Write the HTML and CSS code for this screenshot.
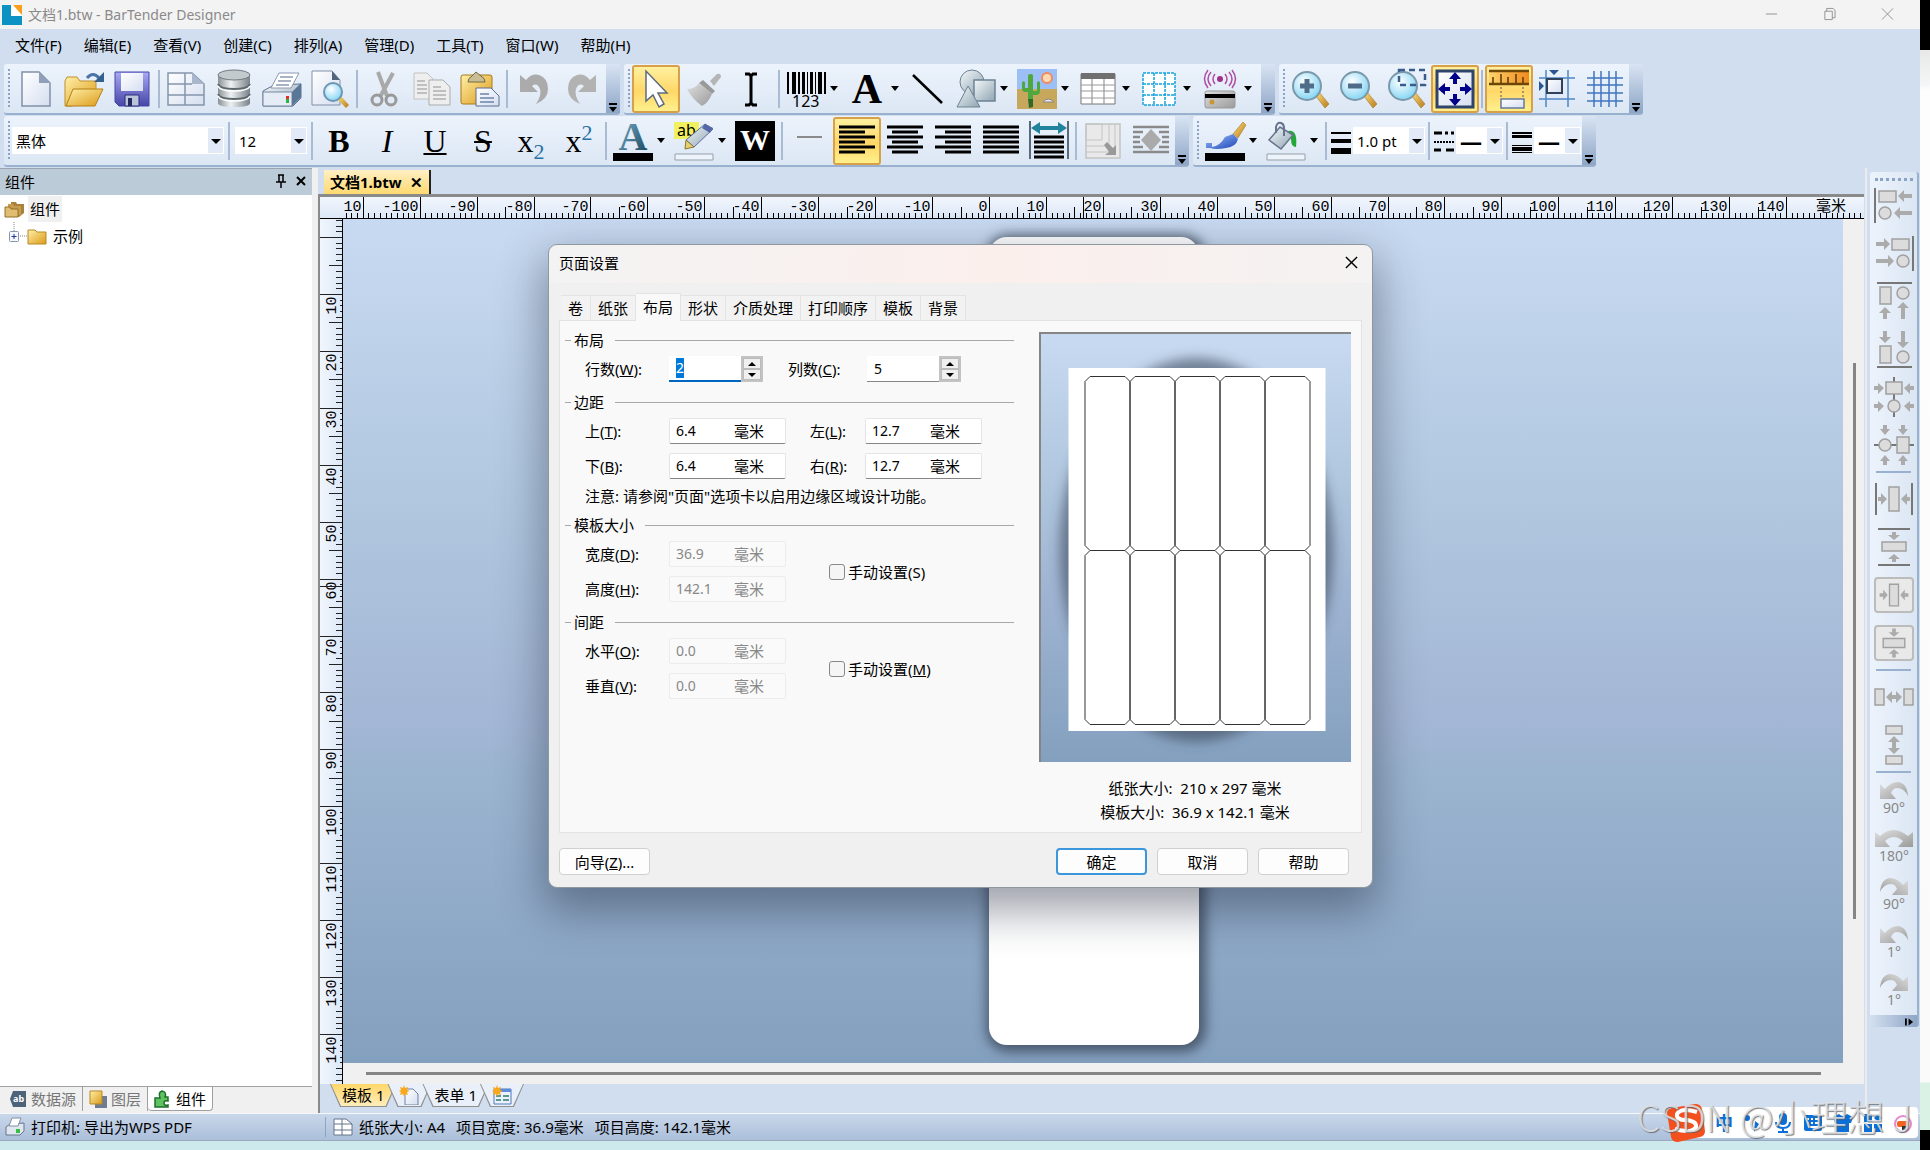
FILE: index.html
```html
<!DOCTYPE html>
<html lang="zh-CN">

<head>
    <meta charset="UTF-8">
    <meta name="viewport" content="width=device-width, initial-scale=1.0">
    <title>文档1.btw - BarTender Designer</title>
    <link rel="stylesheet" href="styles.css">
</head>

<body>

    <!-- Shared gradients -->
    <svg class="defs" aria-hidden="true">
        <defs>
            <linearGradient id="gPage" x1="0" y1="0" x2="1" y2="1"><stop offset="0" stop-color="#ffffff"/><stop offset="1" stop-color="#d5def0"/></linearGradient>
            <linearGradient id="gFolder" x1="0" y1="0" x2="1" y2="1"><stop offset="0" stop-color="#fff0a8"/><stop offset="1" stop-color="#dc9a18"/></linearGradient>
            <linearGradient id="gBlue" x1="0" y1="0" x2="0" y2="1"><stop offset="0" stop-color="#a9a9f5"/><stop offset="1" stop-color="#4646a8"/></linearGradient>
            <linearGradient id="gSteel" x1="0" y1="0" x2="1" y2="0"><stop offset="0" stop-color="#8a9296"/><stop offset=".4" stop-color="#eef1f2"/><stop offset="1" stop-color="#79828a"/></linearGradient>
            <linearGradient id="gGray" x1="0" y1="0" x2="1" y2="1"><stop offset="0" stop-color="#e0e0e0"/><stop offset="1" stop-color="#9a9a9a"/></linearGradient>
            <linearGradient id="gShape" x1="0" y1="0" x2="1" y2="1"><stop offset="0" stop-color="#f4f8fa"/><stop offset="1" stop-color="#8fa4b2"/></linearGradient>
            <linearGradient id="gTeal" x1="0" y1="0" x2="1" y2="1"><stop offset="0" stop-color="#7fb6d0"/><stop offset="1" stop-color="#143f58"/></linearGradient>
            <linearGradient id="gHandle" x1="0" y1="0" x2="1" y2="1"><stop offset="0" stop-color="#ffe27a"/><stop offset="1" stop-color="#b67a1c"/></linearGradient>
            <linearGradient id="gOrange" x1="0" y1="0" x2="1" y2="0"><stop offset="0" stop-color="#ffd36a"/><stop offset="1" stop-color="#f08a1e"/></linearGradient>
            <linearGradient id="gPaint" x1="0" y1="0" x2="1" y2="1"><stop offset="0" stop-color="#9ec0ff"/><stop offset="1" stop-color="#1b45b5"/></linearGradient>
            <radialGradient id="gLens" cx=".4" cy=".35" r=".7"><stop offset="0" stop-color="#ffffff"/><stop offset="1" stop-color="#7ed3f4"/></radialGradient>
            <filter id="soft" x="-20%" y="-20%" width="140%" height="140%"><feGaussianBlur stdDeviation="6"/></filter>
            <symbol id="lens" viewBox="0 0 40 40">
                <path d="M24 26l4-3 10 12-4 4z" fill="url(#gHandle)" stroke="#a9772b" stroke-width=".6"/>
                <circle cx="16" cy="17" r="14" fill="url(#gLens)" stroke="#7c98ab" stroke-width="2"/>
            </symbol>
            <symbol id="arcLeft" viewBox="0 0 28 18">
                <path d="M0 2l5 5q6-7 13-7 9 1 10 14-4-8-11-8-4 0-6 5l5 6H0z" fill="url(#gGray)"/>
            </symbol>
            <symbol id="pageGrid" viewBox="0 0 40 40">
                <path d="M2 4h24l12 11v21H2z" fill="url(#gPage)" stroke="#8595ab" stroke-width="1.5"/>
                <path d="M26 4v11h12z" fill="#a9b8cc"/>
                <path d="M2 15h24M2 26h36M19 4v32" stroke="#8595ab" stroke-width="1.5"/>
            </symbol>
        </defs>
    </svg>

    <div class="app">

        <!-- Title bar -->
        <header class="titlebar">
            <svg class="logo" viewBox="0 0 20 20"><path d="M0 0h9v11h11v9H0z" fill="#0c93c4"/><path d="M9 0h3l8 9v2H9z" fill="#fff"/><path d="M11 0h9v10z" fill="#f9a01b"/></svg>
            <span class="title">文档1.btw - BarTender Designer</span>
            <button class="win-btn" aria-label="最小化"><svg viewBox="0 0 14 14"><path d="M1 7h12"/></svg></button>
            <button class="win-btn" aria-label="还原"><svg viewBox="0 0 14 14"><path d="M2 4h8v9H2zM4 4V1h7l2 2v8h-3"/></svg></button>
            <button class="win-btn" aria-label="关闭"><svg viewBox="0 0 14 14"><path d="M1 1l12 12M13 1L1 13"/></svg></button>
        </header>

        <!-- Menu -->
        <nav class="menubar">
            <button>文件(F)</button>
            <button>编辑(E)</button>
            <button>查看(V)</button>
            <button>创建(C)</button>
            <button>排列(A)</button>
            <button>管理(D)</button>
            <button>工具(T)</button>
            <button>窗口(W)</button>
            <button>帮助(H)</button>
        </nav>

        <!-- Toolbar row 1 -->
        <div class="toolrow">
            <div class="toolbar">
                <button class="tool" aria-label="新建"><svg viewBox="0 0 40 40"><path d="M6 3h17l11 11v23H6z" fill="url(#gPage)" stroke="#8190a8" stroke-width="1.5"/><path d="M23 3v11h11z" fill="#8fa0b8"/></svg></button>
                <button class="tool" aria-label="打开"><svg viewBox="0 0 40 40"><path d="M1 12l2-4h10l3 4h16v10L8 37H1z" fill="url(#gFolder)" stroke="#bf8f2c"/><path d="M9 20h30l-8 17H2z" fill="url(#gFolder)" stroke="#b57f15"/><path d="M23 9q6-7 12 0" fill="none" stroke="#4a74a8" stroke-width="3"/><path d="M40 3v10H30z" fill="#35618f"/></svg></button>
                <button class="tool" aria-label="保存"><svg viewBox="0 0 40 40"><path d="M3 3h34v34H7l-4-4z" fill="url(#gBlue)" stroke="#4646a8"/><path d="M9 4h22v18H9z" fill="url(#gPage)"/><path d="M13 26h14v11H13z" fill="#b8c4d8" stroke="#2c2c80"/><path d="M16 29h4v8h-4z" fill="#222a60"/></svg></button>
                <span class="sep"></span>
                <button class="tool" aria-label="页面设置"><svg><use href="#pageGrid"/></svg></button>
                <button class="tool" aria-label="数据库"><svg viewBox="0 0 40 40"><path d="M4 6v28q0 4 16 4t16-4V6z" fill="url(#gSteel)"/><ellipse cx="20" cy="6" rx="16" ry="5" fill="#c3cacd" stroke="#707a80"/><path d="M4 15q2 5 16 5t16-5M4 25q2 5 16 5t16-5" fill="none" stroke="#5d676c" stroke-width="2"/><path d="M4 17q2 5 16 5t16-5M4 27q2 5 16 5t16-5" fill="none" stroke="#fff" stroke-width="1.5"/></svg></button>
                <button class="tool" aria-label="打印"><svg viewBox="0 0 40 40"><path d="M1 22l11-6 27-1v14l-8 8H1z" fill="url(#gShape)" stroke="#5d7590"/><path d="M1 23h29v14H1z" fill="#e6ecf5" stroke="#7688a0"/><path d="M30 23l9-9v14l-9 9z" fill="#5b7798"/><path d="M17 4h20l-8 15H9z" fill="#fff" stroke="#8b9ab0"/><path d="M18 8h13M16 12h13M14 16h13" stroke="#8b9ab0" stroke-width="1.5"/><path d="M24 27h3v3h-3z" fill="#e03030"/><path d="M24 30h3v4h-3z" fill="#30b040"/></svg></button>
                <button class="tool" aria-label="打印预览"><svg viewBox="0 0 40 40"><path d="M2 2h20l8 9v25H2z" fill="url(#gPage)" stroke="#8190a8"/><path d="M22 2v9h8z" fill="#52657e"/><path d="M27 30l4-3 8 9-3 3z" fill="url(#gHandle)"/><circle cx="23" cy="23" r="9" fill="url(#gLens)" stroke="#6c96b4" stroke-width="2"/></svg></button>
                <span class="sep"></span>
                <button class="tool" aria-label="剪切"><svg viewBox="0 0 40 40"><path d="M14 3l9 24M29 4L16 28" stroke="#a9a9a9" stroke-width="4"/><circle cx="13" cy="31" r="5" fill="none" stroke="#999" stroke-width="3"/><circle cx="27" cy="31" r="5" fill="none" stroke="#999" stroke-width="3"/></svg></button>
                <button class="tool" aria-label="复制"><svg viewBox="0 0 40 40"><path d="M2 4h13l6 6v20H2z" fill="#eee" stroke="#c2c2c2"/><path d="M17 11h14l7 7v18H17z" fill="#eee" stroke="#ababab"/><path d="M5 12h8M5 16h10M5 20h10M5 24h10M21 18h8M21 22h13M21 26h13M21 30h13" stroke="#b0b0b0" stroke-width="1.5"/></svg></button>
                <button class="tool" aria-label="粘贴"><svg viewBox="0 0 40 40"><rect x="1" y="6" width="31" height="29" rx="2" fill="url(#gFolder)" stroke="#a8781a"/><path d="M8 13q0-4 4-6l4-4 5 4q4 2 4 6z" fill="#c9bd96" stroke="#75683c"/><path d="M16 19h15l8 8v10H16z" fill="url(#gPage)" stroke="#5c6f90"/><path d="M20 25h9M20 29h14M20 33h14" stroke="#6c85aa" stroke-width="1.5"/></svg></button>
                <span class="sep"></span>
                <button class="tool" aria-label="撤消"><svg viewBox="0 0 40 40"><path d="M6 6l6 5q6-7 13-5 9 3 9 14 0 10-12 15 6-9 4-15-3-7-8-3l6 6H6z" fill="#ababab"/></svg></button>
                <button class="tool" aria-label="恢复"><svg viewBox="0 0 40 40"><path d="M34 6l-6 5q-6-7-13-5-9 3-9 14 0 10 12 15-6-9-4-15 3-7 8-3l-6 6h18z" fill="#b2b2b2"/></svg></button>
                <button class="cap" aria-label="工具栏选项"></button>
            </div>
            <div class="toolbar">
                <button class="tool active" aria-label="选择"><svg viewBox="0 0 40 40"><path d="M10 2v30l7-6 6 12 5-3-6-11h9z" fill="#fff" stroke="#5d6b80" stroke-width="1.5"/></svg></button>
                <button class="tool" aria-label="格式刷"><svg viewBox="0 0 40 40"><path d="M26 12l7-7q4-1 4 3l-7 9z" fill="#b5b5b5"/><path d="M19 11l12 11-3 3-13-11z" fill="#999"/><path d="M15 14l13 11q-4 9-10 12Q8 30 3 20q8 0 12-6z" fill="url(#gGray)"/></svg></button>
                <button class="tool" aria-label="文本光标"><svg viewBox="0 0 40 40"><path d="M13 5h4l2 2 2-2h4M19 7v27M13 36h4l2-2 2 2h4" fill="none" stroke="#000" stroke-width="3"/></svg></button>
                <span class="sep"></span>
                <button class="tool" aria-label="条形码"><svg viewBox="0 0 40 40"><path d="M1 3h2v22H1zM6 3h4v22H6zM12 3h2v22h-2zM16 3h3v22h-3zM21 3h1v22h-1zM24 3h3v22h-3zM29 3h1v22h-1zM32 3h4v22h-4zM38 3h2v22h-2z"/><text x="6" y="38" class="icon-num">123</text></svg></button><button class="drop" aria-label="条形码选项"></button>
                <button class="tool" aria-label="文本"><svg viewBox="0 0 40 40"><text x="20" y="34" text-anchor="middle" class="glyph-a">A</text></svg></button><button class="drop" aria-label="文本选项"></button>
                <button class="tool" aria-label="线条"><svg viewBox="0 0 40 40"><path d="M5 6l29 28" stroke="#000" stroke-width="2.5"/></svg></button>
                <button class="tool" aria-label="形状"><svg viewBox="0 0 40 40"><circle cx="16" cy="13" r="12" fill="url(#gShape)" stroke="#6c8294"/><path d="M18 11h21v21H18z" fill="url(#gShape)" stroke="#6c8294" stroke-width="1.5"/><path d="M12 17l12 21H1z" fill="url(#gShape)" stroke="#6c8294"/></svg></button><button class="drop" aria-label="形状选项"></button>
                <button class="tool" aria-label="图片"><svg viewBox="0 0 40 40"><path d="M0 0h40v22H0z" fill="#9cc0f5"/><path d="M0 20h40v20H0z" fill="#c7a75c"/><circle cx="30" cy="9" r="5" fill="#ffd9b0" stroke="#f08a60" stroke-width="2"/><path d="M11 6q3-2 5 0v24h-5zM5 14q0-3 3-1v6h4v4H7q-2-1-2-3zM16 22h4v-9q3-2 3 1v8q0 4-4 4h-3z" fill="#4fa83f"/><path d="M11 30h5v8l-4 1z" fill="#2f6a2a"/><path d="M26 33q5-6 11 0z" fill="#e8e8e8" stroke="#888"/></svg></button><button class="drop" aria-label="图片选项"></button>
                <button class="tool" aria-label="表格"><svg viewBox="0 0 40 40"><path d="M3 5h34v30H3z" fill="#fff" stroke="#777"/><path d="M3 4h34v6H3z" fill="#707070"/><path d="M3 16h34M3 22h34M3 29h34M14 10v25M26 10v25" stroke="#999" stroke-width="1.2"/></svg></button><button class="drop" aria-label="表格选项"></button>
                <button class="tool" aria-label="布局网格"><svg viewBox="0 0 40 40"><path d="M4 4h32v32H4zM4 15h32M4 26h32M15 4v32M26 4v32" fill="#fff" stroke="#12a3e0" stroke-width="1.5" stroke-dasharray="3 1"/></svg></button><button class="drop" aria-label="网格选项"></button>
                <button class="tool" aria-label="RFID"><svg viewBox="0 0 40 40"><circle cx="20" cy="10" r="3" fill="#a03090"/><path d="M15 5q-4 5 0 10M25 5q4 5 0 10M11 3q-6 7 0 14M29 3q6 7 0 14M8 1q-7 9 0 18M32 1q7 9 0 18" fill="none" stroke="#b050a5" stroke-width="1.5"/><rect x="5" y="22" width="30" height="17" rx="2" fill="url(#gGray)" stroke="#999"/><path d="M5 25h30v4H5z"/><circle cx="12" cy="33" r="2.5" fill="#c89632"/></svg></button><button class="drop" aria-label="RFID选项"></button>
                <button class="cap" aria-label="工具栏选项"></button>
            </div>
            <div class="toolbar">
                <button class="tool" aria-label="放大"><svg viewBox="0 0 40 40"><use href="#lens"/><path d="M16 10v14M9 17h14" stroke="#4f6d88" stroke-width="5"/></svg></button>
                <button class="tool" aria-label="缩小"><svg viewBox="0 0 40 40"><use href="#lens"/><path d="M9 17h14" stroke="#4f6d88" stroke-width="5"/></svg></button>
                <button class="tool" aria-label="缩放到选区"><svg viewBox="0 0 40 40"><use href="#lens"/><path d="M12 1h26v15H12z" fill="none" stroke="#3a5c8c" stroke-width="2.5" stroke-dasharray="6 4"/></svg></button>
                <button class="tool active" aria-label="适合窗口"><svg viewBox="0 0 40 40"><path d="M2 2h36v36H2z" fill="url(#gPage)" stroke="#2e4468" stroke-width="3"/><path d="M20 3l6 7h-4v5h-4v-5h-4zM20 37l6-7h-4v-5h-4v5h-4zM3 20l7-6v4h5v4h-5v4zM37 20l-7-6v4h-5v4h5v4z" fill="#00008b"/></svg></button>
                <span class="sep"></span>
                <button class="tool active" aria-label="标尺"><svg viewBox="0 0 40 40"><path d="M0 2h40v14H0z" fill="url(#gOrange)"/><path d="M0 2h40M0 15h40" stroke="#6c4708" stroke-width="2.5"/><path d="M4 8v6M12 5v9M19 8v6M27 5v9M34 8v6" stroke="#5a3a08" stroke-width="1.5"/><path d="M12 18v12M34 18v12" stroke="#555" stroke-dasharray="2 2"/><path d="M12 30h23v9H12z" fill="url(#gPage)" stroke="#66799c" stroke-width="1.5"/></svg></button>
                <button class="tool" aria-label="参考线"><svg viewBox="0 0 40 40"><path d="M2 9h36M2 30h36M9 1v37M31 1v37" stroke="#4f86c8" stroke-width="1.5"/><path d="M10 10h15v14H10z" fill="url(#gPage)" stroke="#33425c" stroke-width="2"/><path d="M12 1h10l-5 5zM2 12l5 5-5 5z" fill="#2c5596"/></svg></button>
                <button class="tool" aria-label="网格"><svg viewBox="0 0 40 40"><path d="M2 9h36M2 16h36M2 24h36M2 32h36M9 2v36M16 2v36M24 2v36M31 2v36" stroke="#4076c0" stroke-width="1.5"/></svg></button>
                <button class="cap" aria-label="工具栏选项"></button>
            </div>
        </div>

        <!-- Toolbar row 2 -->
        <div class="toolrow">
            <div class="toolbar">
                <span class="combo combo-font"><select aria-label="字体"><option>黑体</option></select></span>
                <span class="sep"></span>
                <span class="combo combo-size"><select aria-label="字号"><option>12</option></select></span>
                <span class="sep"></span>
                <button class="tool text-tool"><b>B</b></button>
                <button class="tool text-tool"><i>I</i></button>
                <button class="tool text-tool"><u>U</u></button>
                <button class="tool text-tool"><s>S</s></button>
                <button class="tool text-tool">x<sub>2</sub></button>
                <button class="tool text-tool">x<sup>2</sup></button>
                <span class="sep"></span>
                <button class="tool" aria-label="字体颜色"><svg viewBox="0 0 40 40"><text x="20" y="29" text-anchor="middle" class="glyph-a teal">A</text><path d="M0 32h40v8H0z"/></svg></button><button class="drop" aria-label="字体颜色选项"></button>
                <button class="tool" aria-label="突出显示"><svg viewBox="0 0 40 40"><path d="M0 1h25v17H0z" fill="#f0f060"/><text x="3" y="15" class="icon-ab">ab</text><path d="M12 19L31 3l8 5-19 18z" fill="url(#gShape)" stroke="#5c6c9c"/><path d="M31 3l8 4-3 5-8-5z" fill="#5468a8"/><path d="M12 19l8 7-9 2z" fill="#e8d070" stroke="#877530"/><path d="M1 33h38v6H1z" fill="#edf3fa" stroke="#97a0a8"/></svg></button><button class="drop" aria-label="突出显示选项"></button>
                <button class="tool" aria-label="反白"><svg viewBox="0 0 40 40"><path d="M0 0h40v40H0z"/><text x="20" y="29" text-anchor="middle" class="glyph-w">W</text></svg></button>
                <span class="sep"></span>
                <button class="tool" aria-label="水平线"><svg viewBox="0 0 40 40"><path d="M8 16h25" stroke="#8a8a8a" stroke-width="2"/></svg></button>
                <button class="tool active" aria-label="左对齐"><svg viewBox="0 0 40 40"><path d="M2 6h36M2 11h26M2 16h36M2 21h26M2 26h36M2 31h26" stroke="#000" stroke-width="3"/></svg></button>
                <button class="tool" aria-label="居中"><svg viewBox="0 0 40 40"><path d="M2 6h36M7 11h26M2 16h36M7 21h26M2 26h36M7 31h26" stroke="#000" stroke-width="3"/></svg></button>
                <button class="tool" aria-label="右对齐"><svg viewBox="0 0 40 40"><path d="M2 6h36M12 11h26M2 16h36M12 21h26M2 26h36M12 31h26" stroke="#000" stroke-width="3"/></svg></button>
                <button class="tool" aria-label="两端对齐"><svg viewBox="0 0 40 40"><path d="M2 6h36M2 11h36M2 16h36M2 21h36M2 26h36M2 31h36" stroke="#000" stroke-width="3"/></svg></button>
                <button class="tool" aria-label="强制两端对齐"><svg viewBox="0 0 40 40"><path d="M1 0v38M39 0v38" stroke="#556a7c" stroke-width="2"/><path d="M5 16h30M5 21h30M5 26h30M5 31h30M5 36h30" stroke="#000" stroke-width="3"/><path d="M2 7l9-6v4h18V1l9 6-9 6V9H11v4z" fill="#22839c"/></svg></button>
                <span class="sep"></span>
                <button class="tool" aria-label="自动调整"><svg viewBox="0 0 40 40"><path d="M3 3h34v34H3z" fill="#e9e9e9" stroke="#c4c4c4" stroke-width="1.5"/><path d="M3 3h16v16H3zM3 25h23V3M3 31h29V3" fill="none" stroke="#c4c4c4"/><path d="M21 24l3-3 6 6 3-3v10H22l4-3z" fill="#999"/></svg></button>
                <button class="tool" aria-label="文字环绕"><svg viewBox="0 0 40 40"><path d="M2 6h36M2 11h10M28 11h10M2 16h7M31 16h7M2 21h7M31 21h7M2 26h10M28 26h10M2 31h36" stroke="#8a8a8a" stroke-width="2.5"/><path d="M20 8l10 11-10 11-10-11z" fill="#aaa"/></svg></button>
                <button class="cap" aria-label="工具栏选项"></button>
            </div>
            <div class="toolbar">
                <button class="tool" aria-label="线条颜色"><svg viewBox="0 0 40 40"><path d="M28 13L38 1l3 3-8 13z" fill="url(#gHandle)" stroke="#a9772b" stroke-width=".6"/><path d="M1 22h6v4q8-1 13-10l8-3 5 5q-2 8-12 9-10 2-16 0H1z" fill="url(#gPaint)"/><path d="M0 32h40v8H0z"/></svg></button><button class="drop" aria-label="线条颜色选项"></button>
                <button class="tool" aria-label="填充颜色"><svg viewBox="0 0 40 40"><path d="M22 10q10-2 8 16-5 0-5-8z" fill="#22a83a"/><path d="M14 6L3 19l12 9 12-14z" fill="url(#gShape)" stroke="#66748c" stroke-width="1.5"/><path d="M10 12V6q1-5 5-4 3 1 3 5v8" fill="none" stroke="#66748c" stroke-width="2"/><path d="M1 33h38v6H1z" fill="#edf3fa" stroke="#97a0a8"/></svg></button><button class="drop" aria-label="填充颜色选项"></button>
                <span class="sep"></span>
                <svg class="mini" viewBox="0 0 20 26"><path d="M0 4h20v2H0zM0 11h20v4H0zM0 20h20v6H0z"/></svg>
                <span class="combo combo-pt"><select aria-label="线宽"><option>1.0 pt</option></select></span>
                <span class="sep"></span>
                <svg class="mini" viewBox="0 0 20 26"><path d="M0 5h8m3 0h3m3 0h3" stroke="#000" stroke-width="3"/><path d="M0 14h20" stroke="#000" stroke-width="2" stroke-dasharray="2 1"/><path d="M0 22h7m5 0h8" stroke="#000" stroke-width="3"/></svg>
                <span class="combo combo-line"><select aria-label="虚线样式"><option>—</option></select></span>
                <span class="sep"></span>
                <svg class="mini" viewBox="0 0 20 26"><path d="M0 4h20v2H0zM0 7h20v3H0zM0 17h20v1H0zM0 19h20v4H0zM0 24h20v1H0z"/></svg>
                <span class="combo combo-line"><select aria-label="复合线样式"><option>—</option></select></span>
                <button class="cap" aria-label="工具栏选项"></button>
            </div>
        </div>

        <main class="main">

            <!-- Components panel -->
            <aside class="side">
                <div class="side-head">
                    <span>组件</span>
                    <button aria-label="固定"><svg viewBox="0 0 12 14"><path d="M3 1h6M4 1v7M8 1v7M1 8h10M6 8v6" fill="none" stroke="#000" stroke-width="1.5"/></svg></button>
                    <button aria-label="关闭面板"><svg viewBox="0 0 12 14"><path d="M2 3l8 8M10 3l-8 8" stroke="#000" stroke-width="2"/></svg></button>
                </div>
                <ul class="tree">
                    <li><svg viewBox="0 0 20 18"><path d="M7 2h5l1 2h7v9l-5 4H7z" fill="#a8813a"/><path d="M4 4h5l1 2h7v9H4z" fill="#c79c4c"/><path d="M1 7h5l1 2h7v8H1z" fill="#e0bd70" stroke="#93702c"/></svg><span class="root">组件</span></li>
                    <li class="child"><svg class="plus" viewBox="0 0 18 28"><path d="M5 0v9M11 14h7" stroke="#888" stroke-dasharray="1 1"/><rect x=".5" y="9.500" width="9" height="10" rx="1" fill="#f4f7fb" stroke="#8a97a8"/><path d="M2.500 14.500h5M5 12v5" stroke="#203890"/></svg><svg viewBox="0 0 20 18"><path d="M1 3h7l2 2h9v12H1z" fill="url(#gFolder)" stroke="#b58a25"/></svg><span>示例</span></li>
                </ul>
                <div class="side-tabs">
                    <button><svg viewBox="0 0 18 18"><path d="M4 1h13v16H4L1 9z" fill="#4f6378"/><text x="4" y="12" class="icon-tiny">ab</text></svg>数据源</button>
                    <button><svg viewBox="0 0 18 18"><path d="M6 6h12v12H6z" fill="#6d7c90"/><path d="M1 1h12v13H1z" fill="url(#gFolder)" stroke="#b58a25"/></svg>图层</button>
                    <button class="on"><svg viewBox="0 0 18 18"><path d="M1 8h5q-2-6 2-7 5 1 3 6h3v4q-4-1-4 2t4 2v2H1z" fill="#5fc45f" stroke="#1f6d2c" stroke-width="1.5"/></svg>组件</button>
                </div>
            </aside>

            <!-- Document -->
            <section class="doc">
                <div class="doc-tabs"><button class="doc-tab">文档1.btw <span>✕</span></button></div>
                <div class="doc-frame">
                    <svg class="ruler-h" id="rulerH"></svg>
                    <div class="doc-body">
                        <svg class="ruler-v" id="rulerV"></svg>
                        <div class="canvas"><div class="label-page"></div></div>
                        <div class="scroll-v"><span></span></div>
                        <div class="scroll-h"><span></span></div>
                    </div>
                </div>
                <div class="sheets">
                    <button class="sheet on">模板 1</button>
                    <button class="sheet new" aria-label="新建模板"><svg viewBox="0 0 20 20"><path d="M6 4h8l5 5v11H6z" fill="url(#gPage)" stroke="#6c80a0"/><path d="M5 0l1 3 3-1-1 3 3 1-3 1 1 3-3-1-1 3-1-3-3 1 1-3-2-1 2-1-1-3 3 1z" fill="#f9a81b"/></svg></button>
                    <button class="sheet">表单 1</button>
                    <button class="sheet new" aria-label="新建表单"><svg viewBox="0 0 20 20"><path d="M2 4h17v15H2z" fill="#eaf2ff" stroke="#5078b8"/><path d="M2 4h17v3H2z" fill="#5b8ddb"/><path d="M4 11h5m2 0h6M4 15h5m2 0h6" stroke="#5b9a8a" stroke-width="2"/><path d="M5 0l1 3 3-1-1 3 3 1-3 1 1 3-3-1-1 3-1-3-3 1 1-3-2-1 2-1-1-3 3 1z" fill="#f9a81b"/></svg></button>
                </div>
            </section>

            <!-- Arrange toolbar -->
            <aside class="dock">
                <div class="dock-bar">
                    <button class="arr" aria-label="左对齐对象"><svg viewBox="0 0 40 40"><path d="M1 3v35" stroke="#777" stroke-width="2"/><g class="shape"><path d="M5 6h17v11H5z"/><circle cx="11" cy="28" r="6"/></g><path class="arrow" d="M24 11l6-6v4h8v4h-8v4zM20 28l6-6v4h12v4H26v4z"/></svg></button>
                    <button class="arr" aria-label="右对齐对象"><svg viewBox="0 0 40 40"><path d="M39 3v35" stroke="#777" stroke-width="2"/><g class="shape"><path d="M18 6h17v11H18z"/><circle cx="29" cy="28" r="6"/></g><path class="arrow" d="M16 11l-6-6v4H2v4h8v4zM20 28l-6-6v4H2v4h12v4z"/></svg></button>
                    <button class="arr" aria-label="顶端对齐"><svg viewBox="0 0 40 40"><path d="M3 2h35" stroke="#777" stroke-width="2"/><g class="shape"><path d="M6 6h11v17H6z"/><circle cx="29" cy="12" r="6"/></g><path class="arrow" d="M11 26l6 6h-4v6H9v-6H5zM29 21l6 6h-4v11h-4V27h-4z"/></svg></button>
                    <button class="arr" aria-label="底端对齐"><svg viewBox="0 0 40 40"><path d="M3 38h35" stroke="#777" stroke-width="2"/><g class="shape"><path d="M6 17h11v17H6z"/><circle cx="29" cy="28" r="6"/></g><path class="arrow" d="M11 14l6-6h-4V2H9v6H5zM29 19l6-6h-4V2h-4v11h-4z"/></svg></button>
                    <button class="arr" aria-label="垂直居中"><svg viewBox="0 0 40 40"><path d="M20 0v40" stroke="#777" stroke-width="2"/><g class="shape"><path d="M12 5h16v12H12z"/><circle cx="20" cy="29" r="6"/></g><path class="arrow" d="M10 11L4 6v3H0v4h4v4zM30 11l6-5v3h4v4h-4v4zM10 29l-6-5v3H0v4h4v4zM30 29l6-5v3h4v4h-4v4z"/></svg></button>
                    <button class="arr" aria-label="水平居中"><svg viewBox="0 0 40 40"><path d="M0 20h40" stroke="#777" stroke-width="2"/><g class="shape"><path d="M23 12h12v16H23z"/><circle cx="11" cy="20" r="6"/></g><path class="arrow" d="M11 10l5-6h-3V0H9v4H6zM29 10l5-6h-3V0h-4v4h-3zM11 30l5 6h-3v4H9v-4H6zM29 30l5 6h-3v4h-4v-4h-3z"/></svg></button>
                    <span class="hsep"></span>
                    <button class="arr" aria-label="页面水平居中"><svg viewBox="0 0 40 40"><path d="M2 4v32M38 4v32" stroke="#777" stroke-width="2"/><path class="shape" d="M15 8h10v24H15z"/><path class="arrow" d="M13 20l-6-6v4H4v4h3v4zM27 20l6-6v4h3v4h-3v4z"/></svg></button>
                    <button class="arr" aria-label="页面垂直居中"><svg viewBox="0 0 40 40"><path d="M4 2h32M4 38h32" stroke="#777" stroke-width="2"/><path class="shape" d="M8 15h24v9H8z"/><path class="arrow" d="M20 13l6-5h-4V5h-4v3h-4zM20 27l6 5h-4v3h-4v-3h-4z"/></svg></button>
                    <button class="arr boxed" aria-label="模板水平居中"><svg viewBox="0 0 40 40"><path class="shape" d="M15 8h10v24H15z"/><path class="arrow" d="M13 20l-5-6v4H4v4h4v4zM27 20l5-6v4h4v4h-4v4z"/></svg></button>
                    <button class="arr boxed" aria-label="模板垂直居中"><svg viewBox="0 0 40 40"><path class="shape" d="M8 15h24v10H8z"/><path class="arrow" d="M20 13l6-5h-4V4h-4v4h-4zM20 27l6 5h-4v4h-4v-4h-4z"/></svg></button>
                    <span class="hsep"></span>
                    <button class="arr" aria-label="水平间距"><svg viewBox="0 0 40 40"><path class="shape" d="M1 12h9v16H1zM30 12h9v16h-9z"/><path class="arrow" d="M12 20l6-6v4h4v-4l6 6-6 6v-4h-4v4z"/></svg></button>
                    <button class="arr" aria-label="垂直间距"><svg viewBox="0 0 40 40"><path class="shape" d="M12 1h16v8H12zM12 31h16v8H12z"/><path class="arrow" d="M20 11l6 6h-4v6h4l-6 6-6-6h4v-6h-4z"/></svg></button>
                    <span class="hsep"></span>
                    <button class="arr rot"><svg viewBox="0 0 28 18"><use href="#arcLeft"/></svg>90°</button>
                    <button class="arr rot"><svg class="wide" viewBox="0 0 38 18"><path d="M0 2l5 4q13-12 28 0l5-4v15H23l5-6q-9-8-18 0l5 6H0z" fill="url(#gGray)"/></svg>180°</button>
                    <button class="arr rot"><svg class="flip" viewBox="0 0 28 18"><use href="#arcLeft"/></svg>90°</button>
                    <button class="arr rot"><svg viewBox="0 0 28 18"><use href="#arcLeft"/></svg>1°</button>
                    <button class="arr rot"><svg class="flip" viewBox="0 0 28 18"><use href="#arcLeft"/></svg>1°</button>
                    <button class="dock-cap" aria-label="工具栏选项"><svg viewBox="0 0 10 8"><path d="M0 0h2v8H0zM4 0l5 4-5 4z"/></svg></button>
                </div>
            </aside>
        </main>

        <!-- Status bar -->
        <footer class="statusbar">
            <div class="status-left">
                <svg viewBox="0 0 20 20"><path d="M1 10l4-3 14-1v8l-4 4H1z" fill="#dfe6ee" stroke="#65758c"/><path d="M7 1h9l-3 8H4z" fill="#fff" stroke="#8090a5"/><path d="M11 12h4v4h-4z" fill="#35c045"/></svg>
                <span>打印机: 导出为WPS PDF</span>
            </div>
            <div class="status-right">
                <svg viewBox="0 0 20 20"><path d="M1 2h12l6 5v11H1z" fill="#fff" stroke="#65758c"/><path d="M1 7h18M1 13h18M9 2v16" stroke="#65758c"/></svg>
                <span>纸张大小: A4</span><span>项目宽度: 36.9毫米</span><span>项目高度: 142.1毫米</span>
            </div>
        </footer>
        <div class="desktop"></div>
    </div>
    <div class="edge"></div>

    <!-- Page setup dialog -->
    <form class="dialog" role="dialog" aria-labelledby="dlgTitle">
        <div class="dlg-head">
            <span id="dlgTitle">页面设置</span>
            <button type="button" aria-label="关闭"><svg viewBox="0 0 14 14"><path d="M1 1l12 12M13 1L1 13" stroke="#000" stroke-width="1.5"/></svg></button>
        </div>
        <div class="dlg-tabs" role="tablist">
            <button type="button" role="tab">卷</button>
            <button type="button" role="tab">纸张</button>
            <button type="button" role="tab" class="on" aria-selected="true">布局</button>
            <button type="button" role="tab">形状</button>
            <button type="button" role="tab">介质处理</button>
            <button type="button" role="tab">打印顺序</button>
            <button type="button" role="tab">模板</button>
            <button type="button" role="tab">背景</button>
        </div>
        <div class="dlg-page">
            <div class="settings">
                <h2>布局</h2>
                <div class="group">
                    <div class="row">
                        <label for="rows">行数(<u>W</u>):</label>
                        <span class="spin focus"><input id="rows" type="text" value="2"><span class="arrows"><button type="button" class="up" aria-label="增加行数"></button><button type="button" class="down" aria-label="减少行数"></button></span></span>
                        <label for="cols" class="mid">列数(<u>C</u>):</label>
                        <span class="spin"><input id="cols" type="text" value="5"><span class="arrows"><button type="button" class="up" aria-label="增加列数"></button><button type="button" class="down" aria-label="减少列数"></button></span></span>
                    </div>
                </div>
                <h2>边距</h2>
                <div class="group">
                    <div class="row">
                        <label for="mt">上(<u>T</u>):</label>
                        <span class="box"><input id="mt" type="text" value="6.4">毫米</span>
                        <label for="ml" class="right">左(<u>L</u>):</label>
                        <span class="box"><input id="ml" type="text" value="12.7">毫米</span>
                    </div>
                    <div class="row">
                        <label for="mb">下(<u>B</u>):</label>
                        <span class="box"><input id="mb" type="text" value="6.4">毫米</span>
                        <label for="mr" class="right">右(<u>R</u>):</label>
                        <span class="box"><input id="mr" type="text" value="12.7">毫米</span>
                    </div>
                    <p class="note">注意: 请参阅"页面"选项卡以启用边缘区域设计功能。</p>
                </div>
                <h2>模板大小</h2>
                <div class="group split">
                    <div class="rows">
                        <div class="row"><label for="tw">宽度(<u>D</u>):</label><span class="box off"><input id="tw" type="text" value="36.9" disabled>毫米</span></div>
                        <div class="row"><label for="th">高度(<u>H</u>):</label><span class="box off"><input id="th" type="text" value="142.1" disabled>毫米</span></div>
                    </div>
                    <label class="check"><input type="checkbox"><span>手动设置(S)</span></label>
                </div>
                <h2>间距</h2>
                <div class="group split">
                    <div class="rows">
                        <div class="row"><label for="gh">水平(<u>O</u>):</label><span class="box off"><input id="gh" type="text" value="0.0" disabled>毫米</span></div>
                        <div class="row"><label for="gv">垂直(<u>V</u>):</label><span class="box off"><input id="gv" type="text" value="0.0" disabled>毫米</span></div>
                    </div>
                    <label class="check"><input type="checkbox"><span>手动设置(<u>M</u>)</span></label>
                </div>
            </div>
            <div class="preview">
                <svg class="preview-art" id="preview" viewBox="0 0 309 428">
                    <ellipse cx="155" cy="216" rx="137" ry="192" fill="#3d4a5a" fill-opacity=".6" filter="url(#soft)"/>
                    <path d="M27 34h257v363H27z" fill="#fff"/>
                </svg>
                <p>纸张大小:&nbsp; 210 x 297 毫米</p>
                <p>模板大小:&nbsp; 36.9 x 142.1 毫米</p>
            </div>
        </div>
        <div class="dlg-foot">
            <button type="button" class="wizard">向导(<u>Z</u>)...</button>
            <button type="submit" class="default">确定</button>
            <button type="button">取消</button>
            <button type="button">帮助</button>
        </div>
    </form>

    <!-- Input method bar -->
    <div class="ime">
        <svg class="sogou" viewBox="0 0 40 38"><path d="M2 9q0-4 5-5L30 0q6 0 7 5l3 22q0 5-5 6l-22 5q-6 0-7-5z" fill="#f4501e"/><path d="M32 8q-16-5-20 2-1 6 9 6 11 1 10 7-4 7-21 2" fill="none" stroke="#fff" stroke-width="4"/></svg>
        <b>中</b>
        <svg viewBox="0 0 20 20"><circle cx="4" cy="5" r="3"/><path d="M12 8l4 3-5 8z"/></svg>
        <svg viewBox="0 0 20 20"><rect x="6" y="0" width="8" height="12" rx="4"/><path d="M3 9q0 6 7 6t7-6M10 15v4M5 19h10" fill="none" stroke="#0a6fd8" stroke-width="2"/></svg>
        <svg viewBox="0 0 20 20"><rect x="1" y="2" width="18" height="16" rx="2"/><path d="M4 6h2m2 0h2m2 0h4M4 10h2m2 0h2m2 0h4M5 14h10" stroke="#fff" stroke-width="2"/></svg>
        <svg viewBox="0 0 20 20"><path d="M0 4l6-3q4 4 8 0l6 3-2 6h-2v9H4v-9H2z"/></svg>
        <svg viewBox="0 0 20 20"><path d="M1 1h8v8H1zM1 11h8v8H1zM11 11h8v8h-8zM11 5l4-4 4 4-4 4z"/></svg>
        <svg viewBox="0 0 20 20"><circle cx="10" cy="11" r="8" fill="#fff" stroke="#e58ad0" stroke-width="2"/><rect x="4" y="8" width="12" height="6" rx="2" fill="#f4641e"/><path d="M9 13h4v4H9z" fill="#333"/></svg>
    </div>
    <div class="watermark">CSDN @小理想 J</div>

    <script src="script.js"></script>
</body>

</html>
```
FILE: styles.css
```css
* {
    box-sizing: border-box;
}

body,
html {
    margin: 0;
    height: 100%;
    overflow: hidden;
}

body {
    display: flex;
    font-family: "Noto Sans", "Noto Sans CJK SC", sans-serif;
    font-size: 15px;
    line-height: 20px;
    color: #000;
    background: #fff;
}

button,
input,
select {
    font: inherit;
    color: inherit;
    margin: 0;
    padding: 0;
    border: 0;
    background: none;
}

.defs {
    position: absolute;
    width: 0;
    height: 0;
}

.app {
    flex: 1;
    min-width: 0;
    display: flex;
    flex-direction: column;
    background: #d0deef;
}

/* Strip of the window behind */
.edge {
    width: 10px;
    background: linear-gradient(#000 50px, #e8e8e8 50px, #f4f5f6 84px, #fdfdfd 90px, #fafafa 1082px, #daf1e5 1083px, #daf1e5 1130px, #000 1130px);
}

/* Title bar */
.titlebar {
    display: flex;
    align-items: center;
    height: 29px;
    padding: 0 4px 0 2px;
    background: #f3f3f3;
}

.logo {
    width: 20px;
    height: 20px;
    margin-right: 6px;
}

.title {
    flex: 1;
    font-size: 14px;
    color: #8a8a8a;
}

.win-btn {
    width: 58px;
    height: 29px;
}

.win-btn svg {
    width: 13px;
    height: 14px;
    fill: none;
    stroke: #8f8f8f;
}

/* Menu */
.menubar {
    display: flex;
    gap: 22px;
    height: 35px;
    padding: 0 0 3px 15px;
    font-size: 15px;
}

/* Toolbars */
.toolrow {
    display: flex;
    gap: 4px;
    height: 52px;
    padding: 0 0 1px 4px;
}

.toolbar {
    display: flex;
    align-items: center;
    padding-left: 8px;
    border-bottom: 2px solid #9ab0cf;
    border-radius: 3px;
    background: linear-gradient(#ecf3fc, #dce7f4);
    position: relative;
}

.toolbar::before {
    content: "";
    position: absolute;
    left: 4px;
    top: 5px;
    bottom: 6px;
    border-left: 2px dotted #8ba3c4;
}

.tool {
    display: flex;
    align-items: center;
    justify-content: center;
    width: 48px;
    height: 48px;
}

.tool svg {
    width: 40px;
    height: 40px;
    overflow: visible;
}

.tool.active {
    border: 2px solid #d9a04a;
    border-radius: 3px;
    background: linear-gradient(#fff0a0, #ffd768 55%, #fff08c);
}

.sep {
    width: 2px;
    height: 38px;
    margin: 0 2px;
    background: #a9bbd3;
}

.drop {
    width: 13px;
    height: 48px;
}

.drop::before,
.combo::after,
.up::before,
.down::before {
    content: "";
    display: block;
    width: 0;
    border: 4px solid transparent;
    border-top: 5px solid #000;
    border-bottom: 0;
}

.up::before,
.down::before {
    margin: auto;
}

.drop + .cap {
    margin-left: 4px;
}

.cap {
    align-self: stretch;
    width: 14px;
    background: linear-gradient(#d8e4f3, #8ea5c6);
    padding-top: 38px;
}

.cap::before {
    content: "";
    display: block;
    width: 8px;
    margin: 0 auto 2px;
    border-top: 2px solid #000;
}

.cap::after {
    content: "";
    display: block;
    width: 0;
    margin: auto;
    border: 4px solid transparent;
    border-top: 5px solid #000;
    border-bottom: 0;
}

.icon-num {
    font: 16px "Noto Sans", sans-serif;
}

.icon-ab {
    font: 16px "Noto Sans", sans-serif;
}

.icon-tiny {
    font: bold 9px "Noto Sans", sans-serif;
    fill: #fff;
}

.glyph-a {
    font: bold 42px "Liberation Serif", serif;
}

.glyph-a.teal {
    font-size: 40px;
    fill: url(#gTeal);
}

.glyph-w {
    font: bold 30px "Liberation Serif", serif;
    fill: #fff;
}

.text-tool {
    display: block;
    font: 32px/44px "Liberation Serif", serif;
}

.text-tool u,
.text-tool s {
    text-decoration-thickness: 2px;
}

.text-tool sub,
.text-tool sup {
    font-size: 22px;
    line-height: 0;
    color: #2a70a5;
}

.combo {
    position: relative;
    height: 27px;
    background: linear-gradient(#e1eaf6, #e1eaf6) right 1px center / 15px 25px no-repeat #fff;
}

.combo::after {
    position: absolute;
    right: 3px;
    top: 12px;
    border-width: 5px 5px 0;
}

.combo select {
    appearance: none;
    width: 100%;
    height: 27px;
    padding-left: 4px;
}

.combo-font {
    width: 212px;
    margin-right: 2px;
}

.combo-size {
    width: 72px;
    margin: 0 2px 0 3px;
}

.combo-pt {
    width: 72px;
    margin-right: 1px;
}

.combo-line {
    width: 47px;
    margin-right: 1px;
}

.combo-line select {
    font-size: 22px;
    font-weight: bold;
}

.mini {
    width: 20px;
    height: 26px;
    margin: 0 2px;
}

/* Main area */
.main {
    flex: 1;
    min-height: 0;
    display: flex;
}

.side {
    width: 318px;
    display: flex;
    flex-direction: column;
    border-right: 6px solid #f0f0f0;
    background: #fff;
}

.side-head {
    display: flex;
    align-items: center;
    height: 27px;
    padding: 0 1px 0 5px;
    border-top: 1px solid #9aa5b0;
    background: #bccbd8;
}

.side-head span {
    flex: 1;
}

.side-head button {
    width: 20px;
    height: 20px;
}

.side-head svg {
    width: 12px;
    height: 14px;
}

.tree {
    flex: 1;
    margin: 0;
    padding: 0 4px;
    list-style: none;
}

.tree li {
    display: flex;
    align-items: center;
    gap: 4px;
    height: 27px;
}

.tree svg {
    width: 20px;
    height: 18px;
}

.tree .child {
    padding-left: 5px;
    gap: 6px;
}

.tree .child .plus {
    width: 18px;
    height: 28px;
    margin-right: -6px;
}

.root {
    padding: 3px 2px;
    background: #f0f0f0;
}

.side-tabs {
    display: flex;
    height: 27px;
    border-top: 1px solid #a0a0a0;
    background: #f0f0f0;
}

.side-tabs button {
    display: flex;
    align-items: center;
    gap: 4px;
    height: 24px;
    padding: 0 6px;
    color: #777;
    border-right: 1px solid #a0a0a0;
}

.side-tabs button:first-child {
    padding-left: 9px;
}

.side-tabs svg {
    width: 18px;
    height: 18px;
}

.side-tabs .on {
    color: #000;
    background: #fff;
    border-bottom: 1px solid #a0a0a0;
    border-radius: 0 0 4px 4px;
}

.doc {
    flex: 1;
    min-width: 0;
    display: flex;
    flex-direction: column;
}

.doc-tabs {
    height: 26px;
    padding: 2px 6px 0;
}

.doc-tab {
    height: 24px;
    padding: 0 6px;
    font-weight: bold;
    font-size: 15px;
    line-height: 22px;
    border-right: 2px solid #222;
    background: linear-gradient(#fff0c4, #ffd970);
}

.doc-tab span {
    margin-left: 4px;
}

.doc-frame {
    flex: 1;
    min-height: 0;
    display: flex;
    flex-direction: column;
    border: solid #8a8a8a;
    border-width: 3px 0 0 2px;
    margin-right: 1px;
}

.ruler-h {
    width: 100%;
    height: 22px;
    background: linear-gradient(#f1f6fd, #dde8f7);
    border-bottom: 1px solid #000;
}

.ruler-h text,
.ruler-v text {
    font: 15px "Liberation Mono", "Noto Sans CJK SC", monospace;
}

.doc-body {
    flex: 1;
    min-height: 0;
    display: grid;
    grid-template: 1fr 21px / 23px 1fr 21px;
}

.ruler-v {
    grid-row: 1 / 3;
    width: 23px;
    height: 100%;
    background: linear-gradient(90deg, #f1f6fd, #dde8f7);
    border-right: 1px solid #000;
}

.canvas {
    position: relative;
    overflow: hidden;
    background: linear-gradient(#c8daf1, #b0c7df 34%, #a3b6d5 60%, #9bb4d0 65%, #84a0bf);
}

.label-page {
    position: absolute;
    left: 646px;
    top: 18px;
    width: 210px;
    height: 808px;
    border-radius: 18px;
    background: #fff;
    box-shadow: 2px 2px 12px 5px rgba(50, 60, 75, .7);
}

.scroll-v,
.scroll-h {
    background: #f0f0f0;
}

.scroll-v {
    grid-row: 1 / 3;
    grid-column: 3;
    padding: 144px 8px 0 10px;
}

.scroll-v span {
    display: block;
    height: 556px;
    background: #858585;
}

.scroll-h {
    grid-row: 2;
    grid-column: 2;
    padding: 9px 22px 9px 23px;
}

.scroll-h span {
    display: block;
    height: 3px;
    background: #858585;
}

/* Sheet tabs */
.sheets {
    display: flex;
    height: 29px;
    padding-left: 10px;
    border-left: 2px solid #8a8a8a;
}

.sheet {
    position: relative;
    z-index: 0;
    height: 23px;
    padding: 0 12px 1px;
    margin-right: -9px;
    background: #909090;
    clip-path: polygon(0 0, 100% 0, calc(100% - 10px) 100%, 10px 100%);
}

.sheet::before {
    content: "";
    position: absolute;
    z-index: -1;
    inset: 0 1px 1px;
    background: #e9f0f9;
    clip-path: polygon(0 0, 100% 0, calc(100% - 10px) 100%, 10px 100%);
}

.sheet.on::before {
    background: linear-gradient(#ffd76a, #ffedba);
}

.sheet svg {
    display: block;
    width: 20px;
    height: 20px;
}

/* Arrange toolbar */
.dock {
    width: 55px;
    padding: 4px 1px 0 3px;
    border-left: 2px solid #ececec;
}

.dock-bar {
    display: flex;
    flex-direction: column;
    border-right: 2px solid #9ab0cf;
    border-radius: 3px;
    background: linear-gradient(90deg, #ecf3fc, #dbe6f3);
}

.dock-bar::before {
    content: "";
    margin: 0 5px;
    height: 6px;
    border-bottom: 3px dotted #8ba3c4;
    width: 38px;
}

.arr {
    display: flex;
    align-items: center;
    justify-content: center;
    width: 48px;
    height: 48px;
}

.arr svg {
    width: 40px;
    height: 40px;
}

.shape {
    fill: #dcdcdc;
    stroke: #a0a0a0;
    stroke-width: 1.5;
}

.arrow {
    fill: #ababab;
}

.arr.boxed {
    height: 36px;
    width: 40px;
    margin: 6px 4px;
    border: 2px solid #bcbcbc;
    border-radius: 4px;
    background: #e9e9e9;
}

.arr.rot {
    flex-direction: column;
    font-size: 14px;
    line-height: 16px;
    color: #888;
}

.arr.rot svg {
    width: 28px;
    height: 18px;
}

.arr.rot .wide {
    width: 38px;
}

.flip {
    transform: scaleX(-1);
}

.hsep {
    height: 2px;
    margin: 2px 6px;
    background: #9ab0cf;
}

.dock-cap {
    width: 100%;
    height: 12px;
    padding-right: 3px;
    text-align: right;
    line-height: 8px;
    background: linear-gradient(90deg, #d3e0f0, #8ea5c6);
}

.dock-cap svg {
    width: 9px;
    height: 8px;
}

/* Status bar */
.statusbar {
    display: flex;
    align-items: center;
    height: 28px;
    border-top: 1px solid #f4f7fb;
    border-bottom: 1px solid #9aa9bd;
    background: linear-gradient(#c9d7ea, #abbfda);
}

.status-left,
.status-right {
    display: flex;
    align-items: center;
}

.status-left {
    width: 325px;
    padding-left: 5px;
    gap: 6px;
}

.status-right {
    padding-left: 7px;
    gap: 11px;
    border-left: 1px solid #8fa4c2;
}

.status-right svg {
    margin-right: -5px;
}

.statusbar svg {
    width: 20px;
    height: 20px;
}

.desktop {
    height: 9px;
    background: #cde9ec;
}

/* Page setup dialog */
.dialog {
    position: absolute;
    left: 548px;
    top: 244px;
    width: 825px;
    padding: 0 10px 12px;
    border: 1px solid #8f979f;
    border-radius: 9px;
    background: #f0f0f0 linear-gradient(90deg, #f3f3f3, #fbefec 55%, #f4f2f2) 0 0 / 100% 38px no-repeat;
    box-shadow: 0 18px 45px 4px rgba(30, 40, 60, .45);
}

.dlg-head {
    display: flex;
    align-items: center;
    justify-content: space-between;
    height: 36px;
}

.dlg-head button {
    width: 22px;
    height: 22px;
}

.dlg-head svg {
    width: 13px;
    height: 13px;
}

.dlg-tabs {
    display: flex;
    align-items: flex-end;
    height: 39px;
    padding-left: 2px;
}

.dlg-tabs button {
    height: 25px;
    padding: 0 7px;
    border: 1px solid #e3e3e3;
    border-width: 1px 1px 0 0;
    background: #f2f2f2;
}

.dlg-tabs .on {
    height: 28px;
    padding-bottom: 2px;
    margin-bottom: -1px;
    background: #f9f9f9;
}

.dlg-page {
    display: flex;
    justify-content: space-between;
    min-height: 512px;
    padding: 9px 10px 6px 5px;
    border: 1px solid #e3e3e3;
    background: #f9f9f9;
}

.settings {
    width: 449px;
}

.settings h2 {
    display: flex;
    align-items: center;
    gap: 3px;
    margin: 0;
    font-size: 15px;
    font-weight: normal;
}

.settings h2::before,
.settings h2::after {
    content: "";
    width: 6px;
    height: 1px;
    background: #a8a8a8;
}

.settings h2::after {
    flex: 1;
    margin-left: 8px;
}

.group {
    display: flex;
    flex-direction: column;
    gap: 9px;
    margin: 6px 0 10px 20px;
}

.group.split {
    flex-direction: row;
    align-items: center;
    gap: 43px;
}

.rows {
    display: flex;
    flex-direction: column;
    gap: 9px;
}

.row {
    display: flex;
    align-items: center;
    height: 26px;
}

.row label {
    width: 84px;
}

.row .mid {
    width: 79px;
    margin-left: 25px;
}

.row .right {
    width: 55px;
    margin-left: 24px;
}

.box {
    display: flex;
    align-items: center;
    width: 117px;
    height: 26px;
    padding-left: 6px;
    border: 1px solid #e5e5e5;
    border-bottom-color: #868686;
    border-radius: 2px;
    background: #fff;
}

.box input {
    width: 58px;
    font-size: 14px;
}

.box.off {
    color: #888;
    border-color: #ececec;
    background: #fafafa;
}

.spin {
    display: flex;
    width: 94px;
    height: 26px;
    background: #fff;
}

.spin input {
    width: 72px;
    padding-left: 7px;
    font-size: 14px;
    outline: 0;
    border-bottom: 1px solid #868686;
}

.spin.focus input {
    border-bottom: 2px solid #0067c0;
}

.spin input::selection {
    color: #fff;
    background: #0078d7;
}

.arrows {
    display: flex;
    flex-direction: column;
    flex: 1;
    border: 2px solid #c3c3c3;
}

.arrows button {
    flex: 1;
    border: 1px solid #bbb;
    background: #f0f0f0;
}

.arrows .up::before {
    border-width: 0 4px 4px;
    border-bottom: 4px solid #000;
}

.arrows .down::before {
    border-width: 4px 4px 0;
}

.note {
    margin: 0;
    line-height: 17px;
}

.check {
    display: flex;
    align-items: center;
    gap: 3px;
}

.check input {
    appearance: none;
    width: 16px;
    height: 16px;
    border: 1px solid #888;
    border-radius: 3px;
    background: #f5f5f5;
}

.preview {
    width: 312px;
    padding-top: 2px;
    text-align: center;
}

.preview-art {
    display: block;
    width: 312px;
    height: 430px;
    margin-bottom: 16px;
    border: solid #858585;
    border-width: 2px 0 0 2px;
    background: linear-gradient(#c8daf1, #b0c7df 34%, #9fb4d2 60%, #84a0bf);
}

.preview p {
    margin: 0 0 4px;
}

.dlg-foot {
    display: flex;
    gap: 10px;
    padding: 15px 13px 0 0;
}

.dlg-foot button {
    width: 91px;
    height: 27px;
    border: 1px solid #d0d0d0;
    border-radius: 4px;
    background: #fdfdfd;
}

.dlg-foot .wizard {
    margin-right: auto;
}

.dlg-foot .default {
    border: 2px solid #3c96dc;
}

/* Input method bar */
.ime {
    position: absolute;
    right: 12px;
    bottom: 12px;
    display: flex;
    align-items: center;
    gap: 10px;
    height: 31px;
    padding-right: 5px;
    border-radius: 4px;
    background: #fff;
    color: #0a6fd8;
}

.ime svg {
    width: 20px;
    height: 20px;
    fill: #0a6fd8;
}

.ime b {
    font-size: 18px;
}

.ime .sogou {
    width: 40px;
    height: 38px;
    margin-left: -14px;
}

.watermark {
    position: absolute;
    right: 18px;
    bottom: 14px;
    font-family: "Noto Sans CJK SC", sans-serif;
    font-weight: 300;
    font-size: 37px;
    line-height: 40px;
    color: rgba(225, 228, 232, .85);
    text-shadow: 1px 1px 1px rgba(90, 95, 100, .8);
}
```
FILE: script.js
```js
const NS = 'http://www.w3.org/2000/svg';
const STEP = 56.93; // pixels per 10 mm

function add(parent, tag, attrs, text) {
    const el = document.createElementNS(NS, tag);
    for (const key in attrs) el.setAttribute(key, attrs[key]);
    if (text !== undefined) el.textContent = text;
    parent.appendChild(el);
}

// Horizontal ruler
function drawRulerH(svg, zero) {
    let d = '';
    for (let mm = -115; mm <= 153; mm++) {
        const x = Math.round(zero + mm * STEP / 10) + 0.5;
        if (x < 22) continue;
        let top = 16;
        if (mm % 10 === 0 && mm <= 140) top = 0;
        else if (Math.abs(mm) % 10 === 5 && (mm > -10 || (mm + 5) % 20 === 0) && mm !== -105 && mm < 140) top = 10;
        d += `M${x} ${top}V22`;
        if (mm % 10 === 0 && mm <= 140) {
            add(svg, 'text', { x: x - 2, y: 14, 'text-anchor': 'end' }, mm === -110 ? '10' : mm);
        }
    }
    d += 'M763.5 0V22'; // pointer position
    add(svg, 'path', { d: d, stroke: '#000' });
    add(svg, 'text', { x: 1496, y: 14 }, '毫米');
}

// Vertical ruler
function drawRulerV(svg, zero) {
    let d = '';
    for (let mm = -3; mm <= 149; mm++) {
        const y = Math.round(zero + mm * STEP / 10) + 0.5;
        const rest = ((mm % 10) + 10) % 10;
        let left = 16;
        if (rest === 0) left = 0;
        else if (rest === 5 && mm < 100) left = 9;
        else if (mm > 10 && rest < (mm >= 100 ? 6 : 4)) left = 20;
        d += `M${left} ${y}H22`;
        if (rest === 0 && mm > 0) {
            add(svg, 'text', { transform: `translate(16 ${y + 2}) rotate(-90)`, 'text-anchor': 'end' }, mm);
        }
    }
    d += 'M0 367.5H22';
    add(svg, 'path', { d: d, stroke: '#222' });
}

// Sheet preview: 2 rows x 5 columns
function drawPreview(svg, rows, cols) {
    const w = 45, h = 174, c = 5;
    for (let r = 0; r < rows; r++) {
        for (let k = 0; k < cols; k++) {
            const x = 43.5 + k * w, y = 42.5 + r * h;
            add(svg, 'path', {
                d: `M${x + c} ${y}H${x + w - c}L${x + w} ${y + c}V${y + h - c}L${x + w - c} ${y + h}H${x + c}L${x} ${y + h - c}V${y + c}Z`,
                fill: 'none', stroke: '#333'
            });
        }
    }
}

drawRulerH(document.getElementById('rulerH'), 669);
drawRulerV(document.getElementById('rulerV'), 18);
drawPreview(document.getElementById('preview'), 2, 5);

const rowsInput = document.getElementById('rows');
rowsInput.focus();
rowsInput.select();
```
